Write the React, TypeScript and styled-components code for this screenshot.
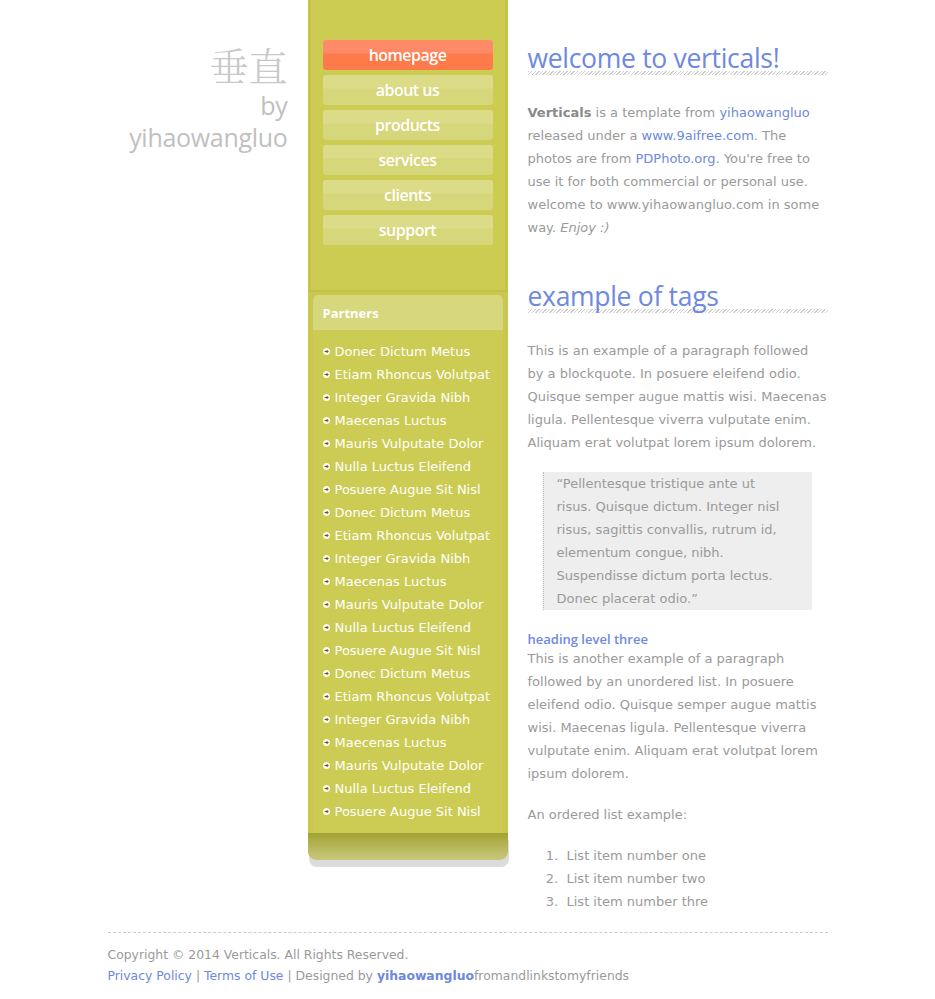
import React from "react";
import styled, { createGlobalStyle } from "styled-components";

const GlobalStyle = createGlobalStyle`
  html, body { margin: 0; padding: 0; background: #ffffff; }
  body { font-family: "DejaVu Sans", Verdana, sans-serif; }
  a { text-decoration: none; }
`;

const HEAD = `"Open Sans", "Noto Sans", sans-serif`;
const BODY = `"DejaVu Sans", Verdana, sans-serif`;

const Page = styled.div`
  width: 720px;
  margin: 0 auto;
  display: flex;
  flex-direction: column;
`;

const Top = styled.div`
  display: flex;
  gap: 20px;
  align-items: flex-start;
`;

const Logo = styled.div`
  width: 180px;
  padding-top: 40px;
  text-align: right;
  color: #c4c4c4;
  display: flex;
  flex-direction: column;
  align-items: flex-end;
`;

const LogoCn = styled.div`
  font-family: "Noto Serif CJK SC", "Noto Sans CJK SC", serif;
  font-size: 39px;
  line-height: 49px;
  font-weight: 300;
  color: #c8c8c8;
`;

const LogoLine = styled.div`
  font-family: ${HEAD};
  font-size: 25px;
  line-height: 32px;
  color: #c0c0c0;
  letter-spacing: -0.3px;
`;

const Sidebar = styled.div`
  width: 200px;
  display: flex;
  flex-direction: column;
  margin-bottom: 8px;
`;

const NavArea = styled.div`
  background: #cccc52;
  border-left: 3px solid #c5c54a;
  border-right: 3px solid #c5c54a;
  border-bottom: 2px solid #c2c247;
  padding: 40px 12px 45px;
  display: flex;
  flex-direction: column;
  gap: 5px;
`;

const NavButton = styled.a<{ $active?: boolean }>`
  display: block;
  height: 30px;
  border-radius: 3px;
  text-align: center;
  color: #ffffff;
  font-family: ${HEAD};
  font-weight: 600;
  font-size: 16px;
  line-height: 30px;
  letter-spacing: -0.5px;
  background: ${(p) =>
    p.$active
      ? "linear-gradient(#ff8a68 0, #ff8a68 13px, #ff7a4a 14px, #ff7a4a 100%)"
      : "linear-gradient(#dcdc88 0, #dcdc88 13px, #d6d67b 14px, #d6d67b 100%)"};
`;

const PartnersWrap = styled.div`
  background: #c8c84e;
  padding: 3px 5px 0;
`;

const PartnersBox = styled.div`
  background: #cccc54;
  border-radius: 5px 5px 0 0;
  overflow: hidden;
`;

const PartnersHead = styled.div`
  background: #d7d77d;
  height: 35px;
  padding: 0 10px;
  font-family: ${HEAD};
  font-weight: 700;
  font-size: 13px;
  line-height: 36px;
  color: #ffffff;
`;

const PartnerList = styled.ul`
  list-style: none;
  margin: 0;
  padding: 10px 0 10px 10px;
`;

const PartnerItem = styled.li`
  display: flex;
  align-items: center;
  gap: 5px;
  height: 23px;
  font-family: ${BODY};
  font-size: 13px;
  color: #ffffff;
  white-space: nowrap;
`;

const SideFoot = styled.div`
  height: 27px;
  background: linear-gradient(#a3a333, #c8c87e);
  border-radius: 0 0 8px 8px;
  box-shadow: 1px 7px 0 #dcdcdc;
`;

const Content = styled.div`
  width: 300px;
  padding-top: 43px;
  font-family: ${BODY};
  font-size: 13px;
  line-height: 23px;
  color: #9a9a9a;
`;

const H2 = styled.h2<{ $top?: number }>`
  margin: ${(p) => p.$top ?? 0}px 0 0;
  font-family: ${HEAD};
  font-weight: 400;
  font-size: 26.5px;
  line-height: 30px;
  letter-spacing: -0.3px;
  color: #6e89e0;
  padding-bottom: 2px;
  background: repeating-linear-gradient(
      135deg,
      #cfcfcf 0,
      #cfcfcf 1px,
      #ffffff 1px,
      #ffffff 2.5px
    )
    bottom / 100% 4px no-repeat;
`;

const P = styled.p<{ $top?: number }>`
  margin: ${(p) => p.$top ?? 18}px 0 0;
`;

const Link = styled.a`
  color: #6d89db;
`;

const Strong = styled.strong`
  color: #8a8a8a;
`;

const Quote = styled.blockquote`
  margin: 18px 16px 0 15px;
  padding: 0 25px 0 13px;
  background: #eeeeee;
  border-left: 1px dotted #bbbbbb;
`;

const H3 = styled.h3`
  margin: 21px 0 0;
  font-family: ${HEAD};
  font-weight: 600;
  font-size: 13px;
  line-height: 16px;
  color: #6e89e0;
`;

const OL = styled.ol`
  margin: 18px 0 0;
  padding-left: 39px;
`;

const OLItem = styled.li`
  &::marker {
    content: counter(list-item) ".\\00a0\\00a0";
  }
`;

const Footer = styled.footer`
  margin-top: 19px;
  border-top: 1px dashed #cccccc;
  padding: 11px 0 0;
  font-family: ${BODY};
  font-size: 12.4px;
  line-height: 21px;
  color: #9a9a9a;
`;

const FootBold = styled.a`
  color: #6d89db;
  font-weight: 700;
`;

const Bullet = () => (
  <svg width="7" height="7" viewBox="0 0 7 7">
    <circle cx="3.5" cy="3.5" r="3.5" fill="#fffbe0" />
    <path d="M1.6 3.5h3.4M3.6 2l1.5 1.5-1.5 1.5" stroke="#555" strokeWidth="1" fill="none" />
  </svg>
);

const partners = [
  "Donec Dictum Metus",
  "Etiam Rhoncus Volutpat",
  "Integer Gravida Nibh",
  "Maecenas Luctus",
  "Mauris Vulputate Dolor",
  "Nulla Luctus Eleifend",
  "Posuere Augue Sit Nisl",
];
const allPartners = [...partners, ...partners, ...partners];

const navItems = ["homepage", "about us", "products", "services", "clients", "support"];

export default function App() {
  return (
    <>
      <GlobalStyle />
      <Page>
        <Top>
          <Logo>
            <LogoCn>垂直</LogoCn>
            <LogoLine>by</LogoLine>
            <LogoLine>yihaowangluo</LogoLine>
          </Logo>
          <Sidebar>
            <NavArea>
              {navItems.map((n, i) => (
                <NavButton key={n} $active={i === 0}>
                  {n}
                </NavButton>
              ))}
            </NavArea>
            <PartnersWrap>
              <PartnersBox>
                <PartnersHead>Partners</PartnersHead>
                <PartnerList>
                  {allPartners.map((p, i) => (
                    <PartnerItem key={i}>
                      <Bullet />
                      {p}
                    </PartnerItem>
                  ))}
                </PartnerList>
              </PartnersBox>
            </PartnersWrap>
            <SideFoot />
          </Sidebar>
          <Content>
            <H2>welcome to verticals!</H2>
            <P $top={26}>
              <Strong>Verticals</Strong> is a template from <Link>yihaowangluo</Link> released under a{" "}
              <Link>www.9aifree.com</Link>. The photos are from <Link>PDPhoto.org</Link>. You're free to use it
              for both commercial or personal use. welcome to www.yihaowangluo.com in some way. <em>Enjoy :)</em>
            </P>
            <H2 $top={42}>example of tags</H2>
            <P $top={26}>
              This is an example of a paragraph followed by a blockquote. In posuere eleifend odio. Quisque
              semper augue mattis wisi. Maecenas ligula. Pellentesque viverra vulputate enim. Aliquam erat
              volutpat lorem ipsum dolorem.
            </P>
            <Quote>
              “Pellentesque tristique ante ut risus. Quisque dictum. Integer nisl risus, sagittis convallis,
              rutrum id, elementum congue, nibh. Suspendisse dictum porta lectus. Donec placerat odio.”
            </Quote>
            <H3>heading level three</H3>
            <P $top={0}>
              This is another example of a paragraph followed by an unordered list. In posuere eleifend odio.
              Quisque semper augue mattis wisi. Maecenas ligula. Pellentesque viverra vulputate enim. Aliquam
              erat volutpat lorem ipsum dolorem.
            </P>
            <P>An ordered list example:</P>
            <OL>
              <OLItem>List item number one</OLItem>
              <OLItem>List item number two</OLItem>
              <OLItem>List item number thre</OLItem>
            </OL>
          </Content>
        </Top>
        <Footer>
          <div>Copyright © 2014 Verticals. All Rights Reserved.</div>
          <div>
            <Link>Privacy Policy</Link> | <Link>Terms of Use</Link> | Designed by <FootBold>yihaowangluo</FootBold>
            fromandlinkstomyfriends
          </div>
        </Footer>
      </Page>
    </>
  );
}
